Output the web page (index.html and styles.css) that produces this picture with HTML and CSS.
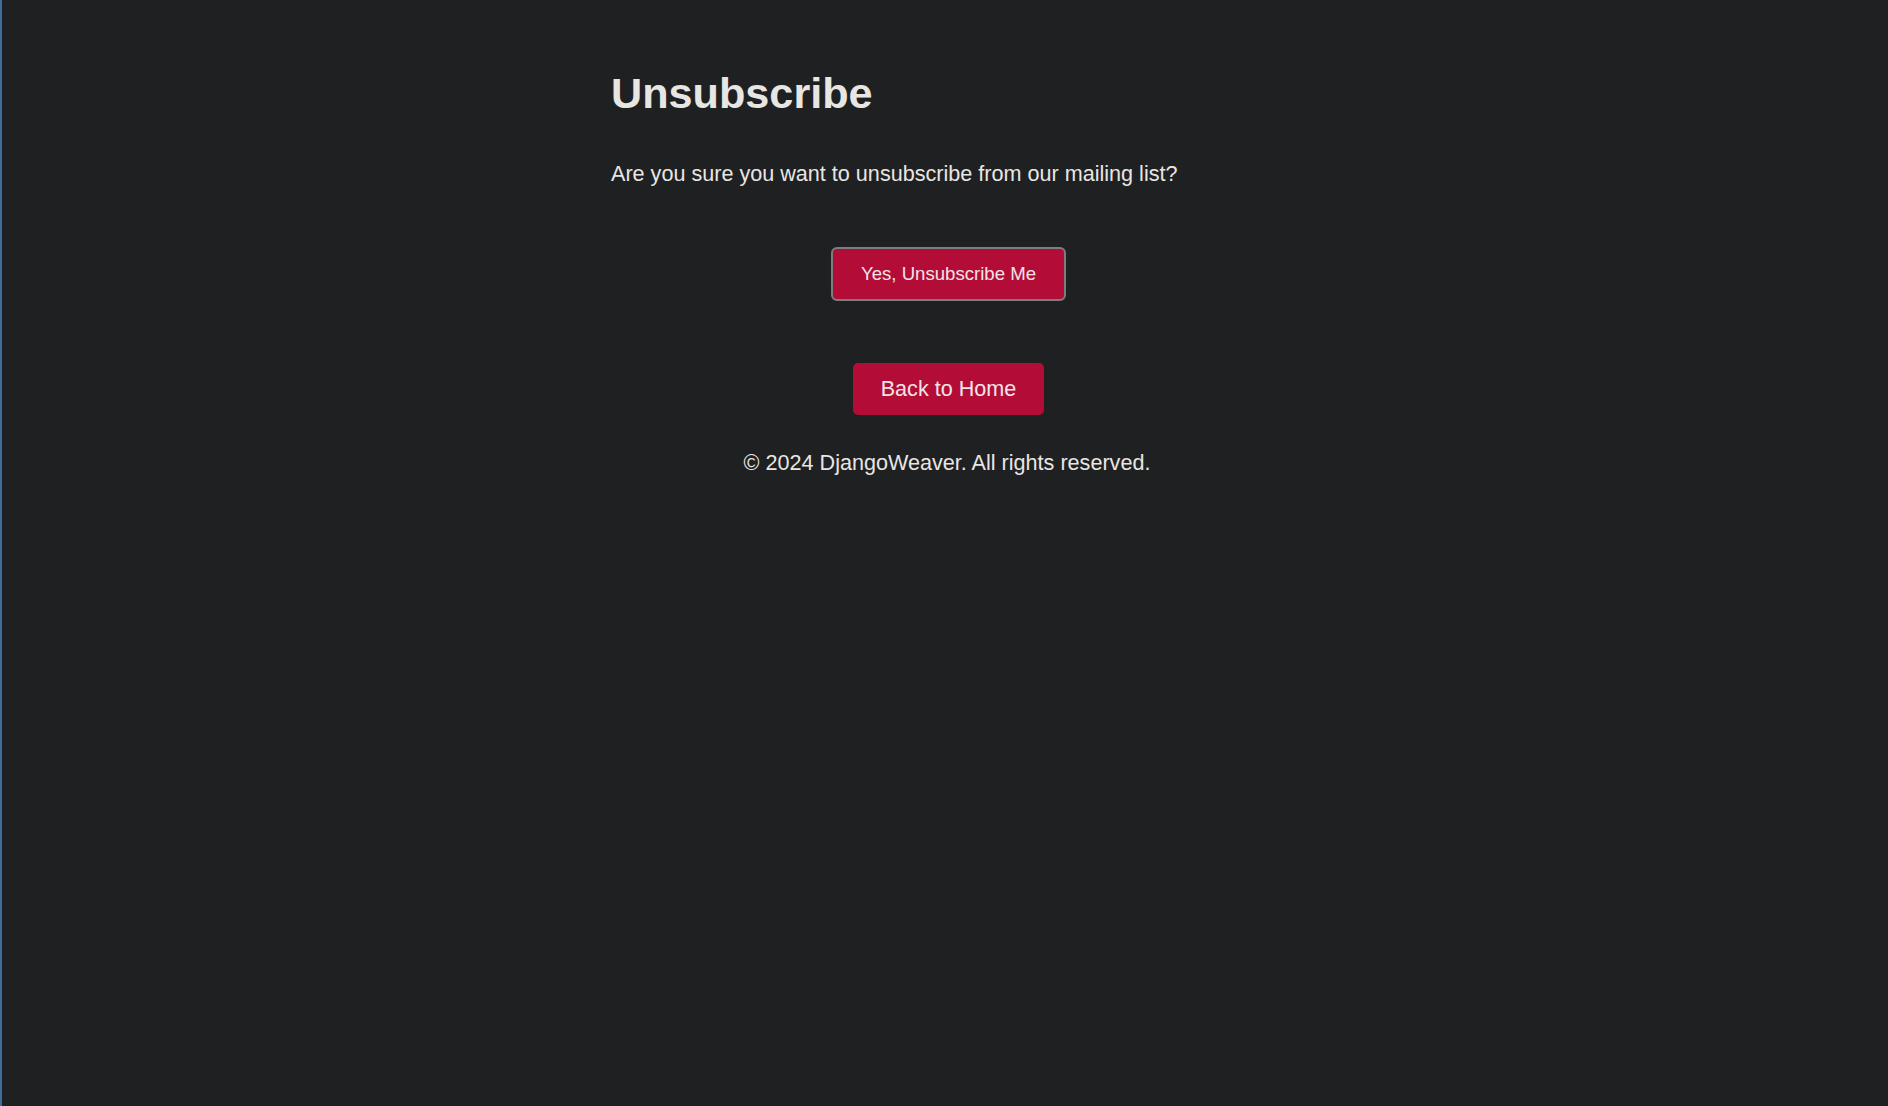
FILE: index.html
```html
<!DOCTYPE html>
<html lang="en">
<head>
<meta charset="utf-8">
<title>Unsubscribe</title>
<link rel="stylesheet" href="styles.css">
</head>
<body>
<main class="container">
  <h1 class="title">Unsubscribe</h1>
  <p class="lead">Are you sure you want to unsubscribe from our mailing list?</p>
  <form class="form">
    <button type="button" class="btn btn-confirm">Yes, Unsubscribe Me</button>
  </form>
  <div class="actions">
    <a class="btn btn-home" href="#">Back to Home</a>
  </div>
  <footer class="footer">© 2024 DjangoWeaver. All rights reserved.</footer>
</main>
</body>
</html>
```

FILE: styles.css
```css
html, body {
  height: 100%;
}
body {
  margin: 0;
  background: #1f2022;
  border-left: 2px solid #3d6e9c;
  box-sizing: border-box;
  padding: 38px 0 0 7px;
  font-family: "Liberation Sans", Arial, sans-serif;
  color: #e8e6e3;
}
.container {
  width: 675px;
  margin: 0 auto;
}
.title {
  font-size: 43.2px;
  font-weight: bold;
  line-height: 49.6px;
  margin: 31px 0 0 0;
}
.lead {
  font-size: 21.6px;
  line-height: 24.8px;
  margin: 43px 0 0 0;
}
.form {
  display: flex;
  justify-content: center;
  margin-top: 61px;
}
.actions {
  display: flex;
  justify-content: center;
  margin-top: 62px;
}
.btn {
  background: #b30d37;
  color: #f1e4e8;
  font-family: "Liberation Sans", Arial, sans-serif;
  border-radius: 5px;
  text-decoration: none;
  box-sizing: border-box;
  display: inline-flex;
  align-items: center;
  justify-content: center;
}
.btn-confirm {
  font-size: 18.6px;
  height: 53.5px;
  padding: 0 28px;
  border: 2px solid #7d7d80;
  border-radius: 6px;
  cursor: pointer;
}
.btn-home {
  font-size: 21.6px;
  height: 52px;
  padding: 0 27.5px;
  border: none;
}
.footer {
  text-align: center;
  font-size: 21.6px;
  line-height: 24.8px;
  margin-top: 36px;
  padding-right: 3px;
}
```
